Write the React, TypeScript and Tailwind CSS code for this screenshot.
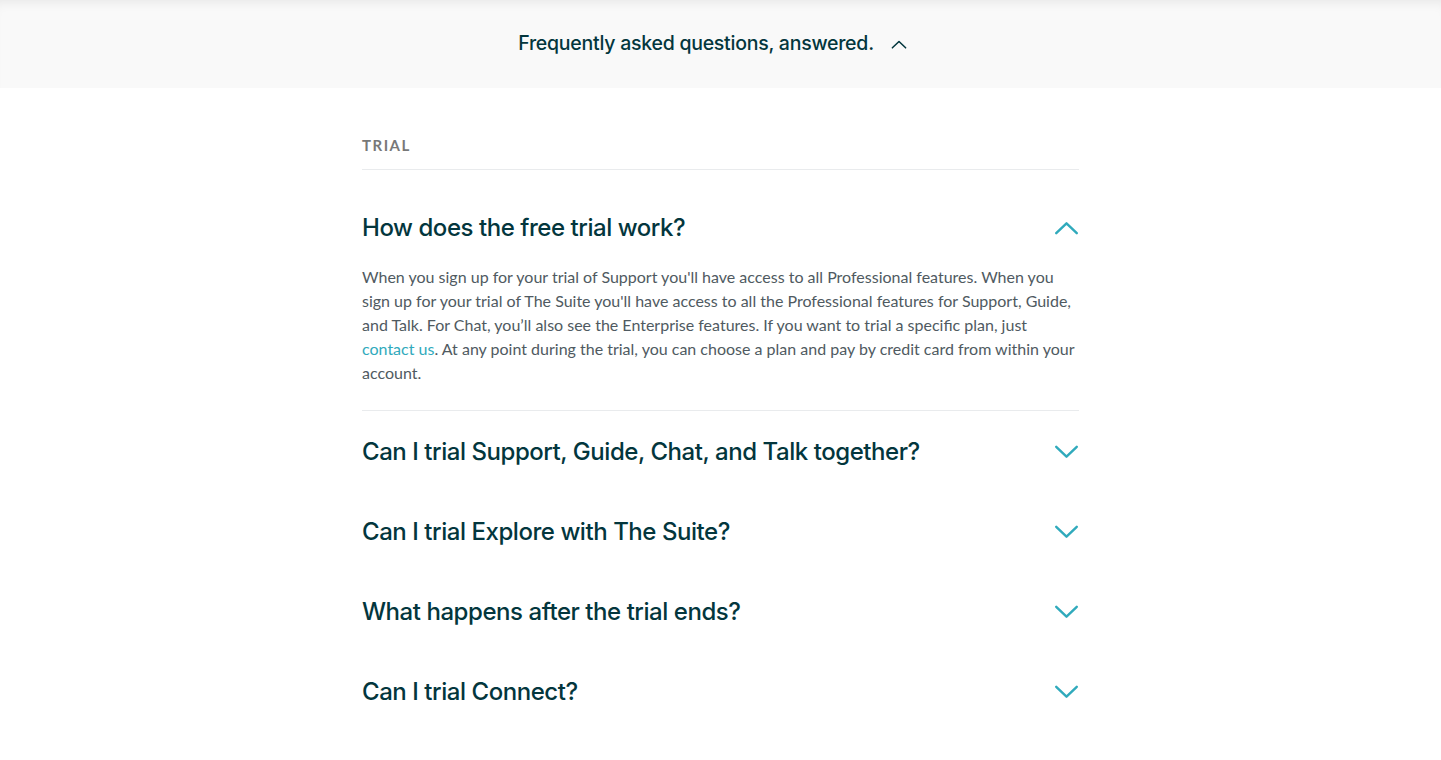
const QUESTIONS = [
  "Can I trial Support, Guide, Chat, and Talk together?",
  "Can I trial Explore with The Suite?",
  "What happens after the trial ends?",
  "Can I trial Connect?",
];

const head = { fontFamily: "Inter, 'Noto Sans', sans-serif" };
const body = { fontFamily: "Lato, 'Open Sans', sans-serif" };

function Chevron({ up, className }: { up?: boolean; className?: string }) {
  return (
    <svg
      viewBox="0 0 26 15"
      className={className}
      fill="none"
      stroke="currentColor"
      strokeWidth={2.6}
      strokeLinecap="round"
      strokeLinejoin="round"
    >
      {up ? <path d="M2 13 13 2.5 24 13" /> : <path d="M2 2 13 12.5 24 2" />}
    </svg>
  );
}

export default function App() {
  return (
    <div className="min-h-[760px] bg-white">
      {/* collapsed banner */}
      <div className="flex h-[88px] items-center justify-center gap-[17px] bg-[#f9f9f9] pr-[16px] shadow-[inset_0_10px_12px_-8px_rgba(0,0,0,0.08)]">
        <span
          className="text-[19.5px] font-medium tracking-[-0.25px] text-[#03363d]"
          style={head}
        >
          Frequently asked questions, answered.
        </span>
        <Chevron up className="h-[9px] w-[16px] text-[#03363d]" />
      </div>

      <div className="mx-auto w-[717px] pt-[46px]">
        <div
          className="border-b border-[#e9ebed] pb-[12px] text-[15px] font-bold tracking-[1.5px] text-[#787878]"
          style={body}
        >
          TRIAL
        </div>

        <div className="border-b border-[#e9ebed] pb-[25px]">
          <div className="flex items-center justify-between pt-[43px]">
            <h3
              className="text-[24px] font-medium leading-[30px] tracking-[-0.45px] text-[#03363d]"
              style={head}
            >
              How does the free trial work?
            </h3>
            <Chevron up className="h-[14px] w-[25px] text-[#30aabc]" />
          </div>
          <p
            className="mt-[22px] text-[16px] leading-[24px] text-[#4f5a61]"
            style={body}
          >
            When you sign up for your trial of Support you'll have access to all
            Professional features. When you sign up for your trial of The Suite
            you'll have access to all the Professional features for Support,
            Guide, and Talk. For Chat, you’ll also see the Enterprise features.
            If you want to trial a specific plan, just{" "}
            <a className="text-[#30aabc]" href="#">
              contact us
            </a>
            . At any point during the trial, you can choose a plan and pay by
            credit card from within your account.
          </p>
        </div>

        <div className="pt-[1px]">
          {QUESTIONS.map((q) => (
            <div key={q} className="flex h-[80px] items-center justify-between">
              <h3
                className="text-[24px] font-medium leading-[30px] tracking-[-0.45px] text-[#03363d]"
                style={head}
              >
                {q}
              </h3>
              <Chevron className="h-[14px] w-[25px] text-[#30aabc]" />
            </div>
          ))}
        </div>
      </div>
    </div>
  );
}
